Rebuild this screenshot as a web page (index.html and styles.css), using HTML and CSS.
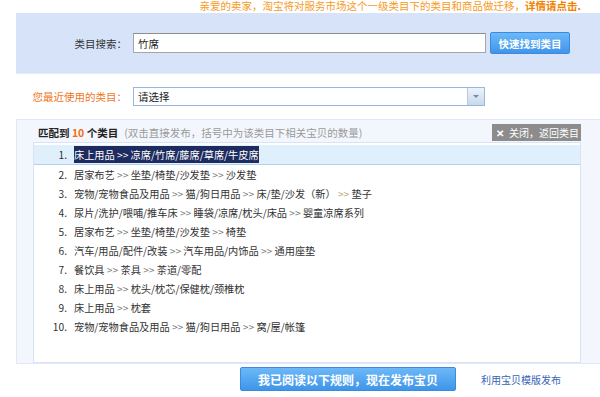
FILE: index.html
```html
<!DOCTYPE html>
<html lang="zh-CN">
<head>
    <meta charset="UTF-8">
    <meta name="viewport" content="width=device-width, initial-scale=1.0">
    <title>选择类目</title>
    <link rel="stylesheet" href="styles.css">
</head>
<body>
    <div class="notice">亲爱的卖家，淘宝将对服务市场这个一级类目下的类目和商品做迁移，<b>详情请点击.</b></div>

    <div class="search-panel">
        <label class="field-label" for="cat-search">类目搜索：</label>
        <input id="cat-search" class="search-input" type="text" value="竹席">
        <button class="btn-blue btn-find">快速找到类目</button>
    </div>

    <div class="recent-row">
        <span class="field-label recent-label">您最近使用的类目：</span>
        <div class="fake-select">
            <span class="fake-select-text">请选择</span>
            <span class="fake-select-arrow"></span>
        </div>
    </div>

    <div class="result-panel">
        <div class="result-head">
            <span class="result-title">匹配到 <em>10</em> 个类目</span>
            <span class="result-hint">(双击直接发布，括号中为该类目下相关宝贝的数量)</span>
            <button class="btn-close"><span class="x">✕</span>关闭，返回类目</button>
        </div>
        <ol class="result-list">
            <li class="active"><span class="num">1.</span><span class="sel">床上用品 &gt;&gt; 凉席/竹席/藤席/草席/牛皮席</span></li>
            <li><span class="num">2.</span>居家布艺 <i>&gt;&gt;</i> 坐垫/椅垫/沙发垫 <i>&gt;&gt;</i> 沙发垫</li>
            <li><span class="num">3.</span>宠物/宠物食品及用品 <i>&gt;&gt;</i> 猫/狗日用品 <i>&gt;&gt;</i> 床/垫/沙发（新） <i class="tan">&gt;&gt;</i> 垫子</li>
            <li><span class="num">4.</span>尿片/洗护/喂哺/推车床 <i>&gt;&gt;</i> 睡袋/凉席/枕头/床品 <i>&gt;&gt;</i> 婴童凉席系列</li>
            <li><span class="num">5.</span>居家布艺 <i>&gt;&gt;</i> 坐垫/椅垫/沙发垫 <i>&gt;&gt;</i> 椅垫</li>
            <li><span class="num">6.</span>汽车/用品/配件/改装 <i>&gt;&gt;</i> 汽车用品/内饰品 <i>&gt;&gt;</i> 通用座垫</li>
            <li><span class="num">7.</span>餐饮具 <i>&gt;&gt;</i> 茶具 <i>&gt;&gt;</i> 茶道/零配</li>
            <li><span class="num">8.</span>床上用品 <i>&gt;&gt;</i> 枕头/枕芯/保健枕/颈椎枕</li>
            <li><span class="num">9.</span>床上用品 <i>&gt;&gt;</i> 枕套</li>
            <li><span class="num">10.</span>宠物/宠物食品及用品 <i>&gt;&gt;</i> 猫/狗日用品 <i>&gt;&gt;</i> 窝/屋/帐篷</li>
        </ol>
    </div>

    <div class="actions">
        <button class="btn-blue btn-publish">我已阅读以下规则，现在发布宝贝</button>
        <a class="tpl-link" href="#">利用宝贝模版发布</a>
    </div>
</body>
</html>
```

FILE: styles.css
```css
body {
    margin: 0;
    font-family: "Noto Sans CJK SC", "Noto Sans", sans-serif;
    font-size: 10.5px;
    color: #333;
    background: #fff;
}

.notice {
    height: 13px;
    line-height: 12px;
    text-align: right;
    padding-right: 19px;
    color: #f79a1e;
}

.notice b {
    color: #f08300;
}

.search-panel {
    margin-left: 16px;
    height: 60px;
    background: #d6e3f9;
    border-bottom: 1px solid #e4ecfa;
    display: flex;
    align-items: center;
}

.field-label {
    width: 111px;
    text-align: right;
    color: #333;
}

.search-input {
    margin-left: 6px;
    width: 343px;
    height: 18px;
    padding: 0 4px;
    border: 1px solid #a6a6a6;
    border-top-color: #8e8e8e;
    font-family: inherit;
    font-size: 10.5px;
    color: #222;
    outline: none;
}

.btn-blue {
    border: 1px solid #3a8ae0;
    border-radius: 2px;
    background: linear-gradient(#6cb9f8, #3f95ea);
    color: #fff;
    font-family: inherit;
    font-weight: bold;
    cursor: pointer;
}

.btn-find {
    margin-left: 4px;
    width: 80px;
    height: 22px;
    font-size: 10.5px;
    padding: 0;
}

.recent-row {
    margin-left: 16px;
    height: 45px;
    display: flex;
    align-items: center;
}

.recent-label {
    color: #f0771e;
}

.fake-select {
    margin-left: 6px;
    width: 350px;
    height: 17px;
    border: 1px solid #95b8e2;
    display: flex;
    align-items: center;
    background: #fff;
}

.fake-select-text {
    flex: 1;
    padding-left: 4px;
    color: #222;
}

.fake-select-arrow {
    width: 16px;
    height: 17px;
    border-left: 1px solid #b3c9e6;
    background: linear-gradient(#eef3fa, #c9d8eb);
    position: relative;
}

.fake-select-arrow::after {
    content: "";
    position: absolute;
    left: 5px;
    top: 7px;
    border-left: 3px solid transparent;
    border-right: 3px solid transparent;
    border-top: 3px solid #6b8cbb;
}

.result-panel {
    margin-left: 16px;
    height: 240px;
    background: #f3f7fd;
    border: 1px solid #e0e9f7;
    border-right: none;
    padding: 3px 19px 0 16px;
    display: flex;
    flex-direction: column;
}

.result-head {
    height: 18px;
    display: flex;
    align-items: center;
    padding-left: 5px;
    margin-bottom: 1px;
}

.result-title {
    font-weight: bold;
    color: #222;
}

.result-title em {
    font-style: normal;
    color: #f26c13;
}

.result-hint {
    margin-left: 6px;
    color: #9a9a9a;
}

.btn-close {
    margin-left: auto;
    height: 17px;
    width: 89px;
    padding: 0 0 0 4px;
    border: none;
    background: #8c8c8c;
    color: #fff;
    font-family: inherit;
    font-size: 10px;
    text-align: left;
    white-space: nowrap;
    display: flex;
    align-items: center;
}

.btn-close .x {
    font-weight: bold;
    margin-right: 5px;
    font-size: 10px;
}

.result-list {
    flex: 1;
    margin: 0;
    padding: 2px 0 0;
    list-style: none;
    background: #fff;
    border: 1px solid #d6e4f5;
    font-size: 10.2px;
}

.result-list li {
    height: 19px;
    line-height: 19px;
    white-space: nowrap;
}

.result-list li.active {
    background: #dfeffb;
    border-bottom: 1px solid #acd3f0;
}

.result-list .num {
    display: inline-block;
    width: 33px;
    text-align: right;
    margin-right: 7px;
}

.result-list i {
    font-style: normal;
    color: #777;
}

.result-list i.tan {
    color: #c2a56a;
}

.result-list .sel {
    background: #1d2b5e;
    color: #fff;
    padding: 1px 0;
}

.actions {
    display: flex;
    align-items: center;
    padding: 3px 0 0 240px;
}

.btn-publish {
    width: 216px;
    height: 24px;
    font-size: 12px;
    padding: 0;
}

.tpl-link {
    margin-left: 25px;
    color: #3a63b8;
    font-size: 10px;
    text-decoration: none;
}
```
